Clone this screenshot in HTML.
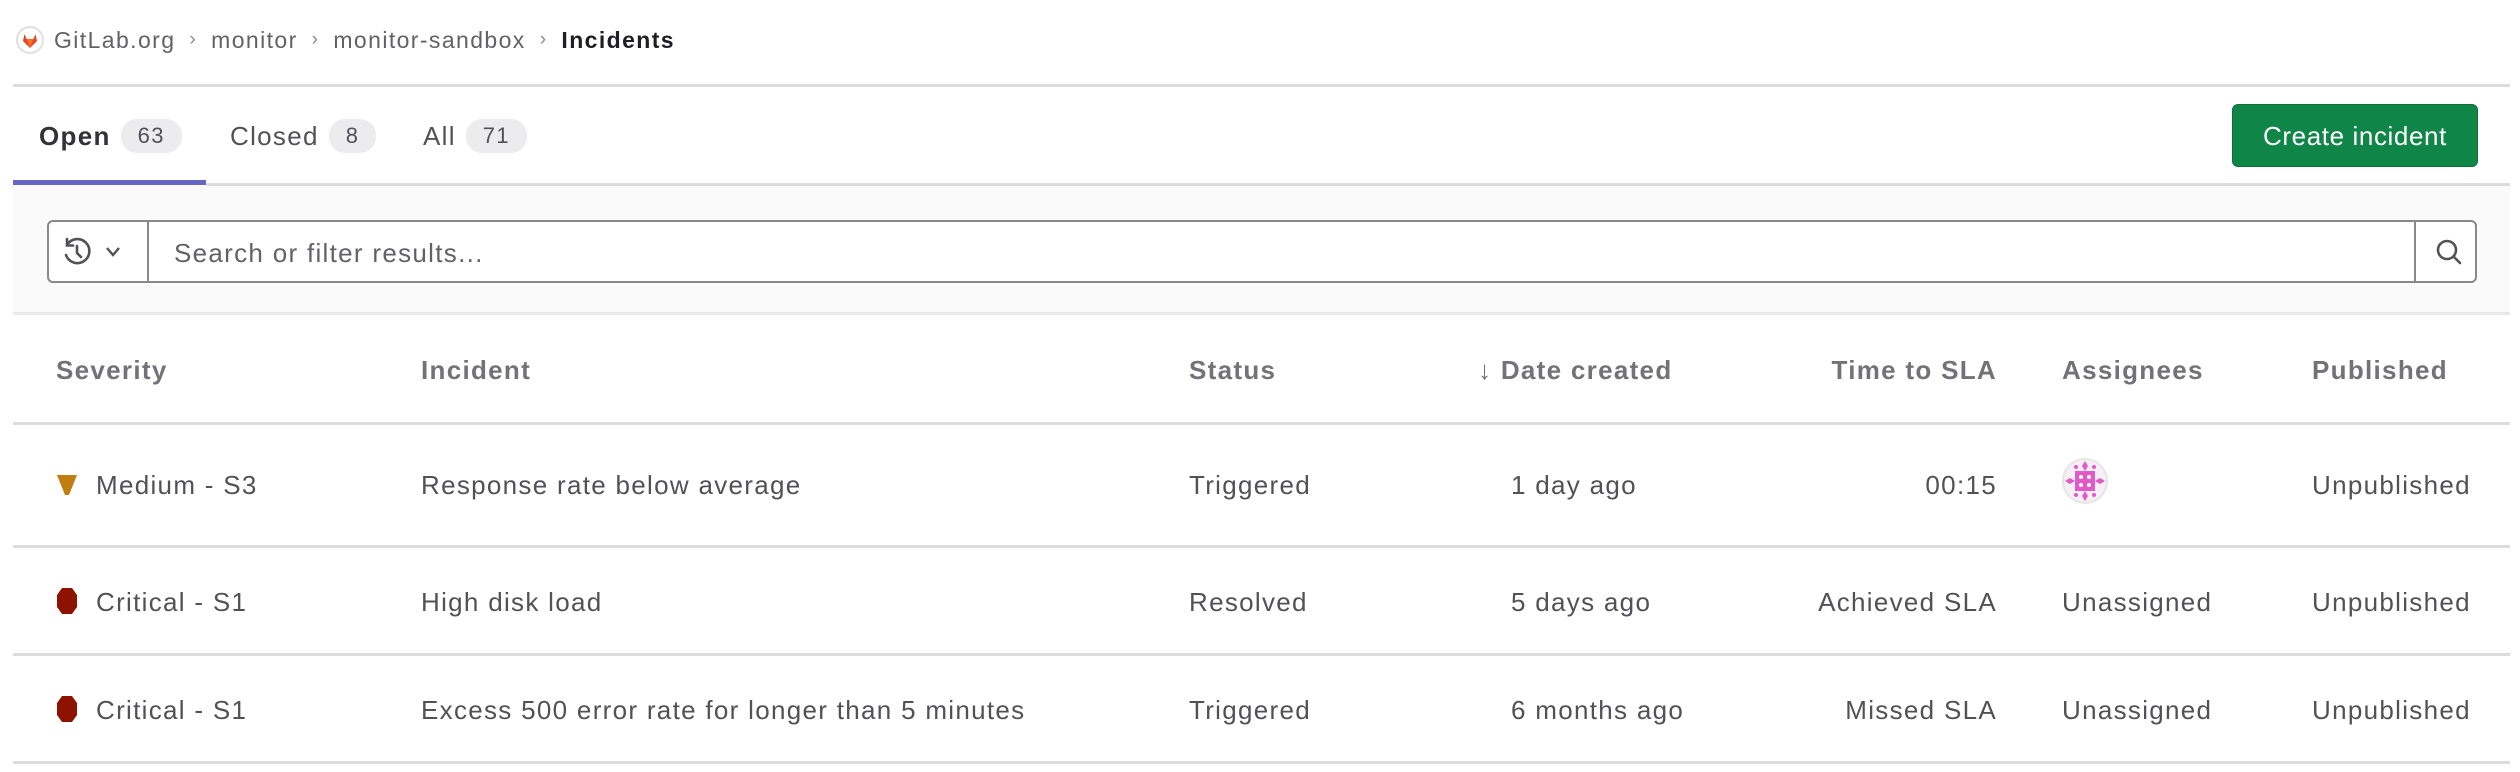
<!DOCTYPE html>
<html><head><meta charset="utf-8"><style>
*{box-sizing:border-box;margin:0;padding:0}
body{width:2520px;height:772px;background:#fff;font-family:"Liberation Sans",sans-serif;color:#535158;position:relative;overflow:hidden;letter-spacing:1.3px}
.abs{position:absolute}
.bc{top:24px;left:16px;height:32px;display:flex;align-items:center;font-size:23px;color:#626168;letter-spacing:1.4px}
.bc .sep{margin:0 14px;color:#89888d;font-size:19px}
.hl{left:13px;right:10px;height:3px;background:#dcdcde}
.tab{top:119px;font-size:26px;display:flex;align-items:center;color:#535158}
.badge{background:#ececef;border-radius:16px;height:34px;line-height:34px;padding:0 17px;font-size:22px;margin-left:10px;color:#535158}
.btn{left:2232px;top:104px;width:246px;height:63px;background:#108548;border-radius:6px;color:#fff;font-size:26px;text-align:center;line-height:63px;border:1px solid #0d6e3a;letter-spacing:0.6px}
.filter{left:13px;right:10px;top:186px;height:129px;background:#fafafa;border-bottom:3px solid #e8e8ea}
.search{left:47px;top:220px;width:2430px;height:63px;border:2px solid #89888d;border-radius:6px;background:#fff}
.th{top:355px;font-size:26px;font-weight:bold;color:#737278}
.td{font-size:26px;color:#535158}
</style></head><body>
<div class="abs bc">
<svg width="28" height="28" viewBox="0 0 28 28" style="margin-right:10px"><circle cx="14" cy="14" r="13" fill="#fff" stroke="#e0e0e0" stroke-width="2"/><path d="M14 22 L7 15 L8.5 8 L10.5 13 H17.5 L19.5 8 L21 15 Z" fill="#e24329"/><path d="M14 22 L10.5 13 H17.5 Z" fill="#fc6d26"/></svg>
<span>GitLab.org</span><span class="sep">›</span><span>monitor</span><span class="sep">›</span><span>monitor-sandbox</span><span class="sep">›</span><span style="color:#1f1e24;font-weight:bold">Incidents</span></div>
<div class="abs hl" style="top:84px"></div>
<div class="abs tab" style="left:39px;font-weight:bold;color:#333238">Open<span class="badge" style="font-weight:normal">63</span></div>
<div class="abs tab" style="left:230px">Closed<span class="badge">8</span></div>
<div class="abs tab" style="left:423px">All<span class="badge">71</span></div>
<div class="abs btn">Create incident</div>
<div class="abs filter"></div>
<div class="abs" style="left:13px;top:180px;width:193px;height:5px;background:#6666c4"></div>
<div class="abs" style="left:206px;right:10px;top:183px;height:3px;background:#dcdcde"></div>
<div class="abs search">
 <svg class="abs" style="left:12px;top:14px" width="32" height="32" viewBox="0 0 32 32" fill="none" stroke="#535158" stroke-width="2.6" stroke-linecap="round"><path d="M6 9 A12 12 0 1 1 5 19"/><path d="M6 3 V9.5 H12"/><path d="M16 10 V17 L20 21"/></svg>
 <svg class="abs" style="left:56px;top:24px" width="16" height="12" viewBox="0 0 16 12" fill="none" stroke="#535158" stroke-width="2.4"><path d="M2 2 L8 9 L14 2"/></svg>
 <div class="abs" style="left:98px;top:0;bottom:0;width:2px;background:#89888d"></div>
 <div class="abs" style="left:125px;top:16px;font-size:26px;color:#626168">Search or filter results...</div>
 <div class="abs" style="left:2365px;top:0;bottom:0;width:2px;background:#89888d"></div>
 <svg class="abs" style="left:2384px;top:14px" width="32" height="32" viewBox="0 0 32 32" fill="none" stroke="#535158" stroke-width="2.6" stroke-linecap="round"><circle cx="14" cy="14" r="9"/><path d="M21 21 L27 27"/></svg>
</div>
<div class="abs th" style="left:56px">Severity</div>
<div class="abs th" style="left:421px">Incident</div>
<div class="abs th" style="left:1189px">Status</div>
<div class="abs th" style="left:1478px;color:#737278">↓ Date created</div>
<div class="abs th" style="left:1600px;width:397px;text-align:right">Time to SLA</div>
<div class="abs th" style="left:2062px">Assignees</div>
<div class="abs th" style="left:2312px">Published</div>
<div class="abs hl" style="top:422px;height:3px"></div>
<!-- row1 -->
<svg class="abs" style="left:56px;top:474px" width="22" height="22" viewBox="0 0 22 22"><path d="M1 1 H21 L13 21 H9 Z" fill="#c17d10"/></svg>
<div class="abs td" style="left:96px;top:470px">Medium - S3</div>
<div class="abs td" style="left:421px;top:470px">Response rate below average</div>
<div class="abs td" style="left:1189px;top:470px">Triggered</div>
<div class="abs td" style="left:1511px;top:470px">1 day ago</div>
<div class="abs td" style="left:1600px;width:397px;text-align:right;top:470px">00:15</div>
<svg class="abs" style="left:2062px;top:458px" width="46" height="46" viewBox="0 0 46 46"><circle cx="23" cy="23" r="22" fill="#f7eef6" stroke="#e6e6e6" stroke-width="2"/><rect x="13" y="13" width="20" height="20" fill="#e05bc8"/><g fill="#fff"><circle cx="19" cy="19" r="2"/><circle cx="27" cy="19" r="2"/><circle cx="19" cy="27" r="2"/><circle cx="27" cy="27" r="2"/></g><g fill="#e05bc8"><path d="M23 3 l3 5 -3 5 -3 -5z"/><path d="M23 33 l3 5 -3 5 -3 -5z"/><path d="M3 23 l5 -3 5 3 -5 3z"/><path d="M33 23 l5 -3 5 3 -5 3z"/><circle cx="14" cy="9" r="2"/><circle cx="32" cy="9" r="2"/><circle cx="14" cy="37" r="2"/><circle cx="32" cy="37" r="2"/></g></svg>
<div class="abs td" style="left:2312px;top:470px">Unpublished</div>
<div class="abs hl" style="top:545px"></div>
<!-- row2 -->
<svg class="abs" style="left:56px;top:587px" width="22" height="28" viewBox="0 0 22 28"><path d="M6 1 H16 L21 8 V20 L16 27 H6 L1 20 V8 Z" fill="#8d1300"/></svg>
<div class="abs td" style="left:96px;top:587px">Critical - S1</div>
<div class="abs td" style="left:421px;top:587px">High disk load</div>
<div class="abs td" style="left:1189px;top:587px">Resolved</div>
<div class="abs td" style="left:1511px;top:587px">5 days ago</div>
<div class="abs td" style="left:1600px;width:397px;text-align:right;top:587px">Achieved SLA</div>
<div class="abs td" style="left:2062px;top:587px">Unassigned</div>
<div class="abs td" style="left:2312px;top:587px">Unpublished</div>
<div class="abs hl" style="top:653px"></div>
<!-- row3 -->
<svg class="abs" style="left:56px;top:695px" width="22" height="28" viewBox="0 0 22 28"><path d="M6 1 H16 L21 8 V20 L16 27 H6 L1 20 V8 Z" fill="#8d1300"/></svg>
<div class="abs td" style="left:96px;top:695px">Critical - S1</div>
<div class="abs td" style="left:421px;top:695px">Excess 500 error rate for longer than 5 minutes</div>
<div class="abs td" style="left:1189px;top:695px">Triggered</div>
<div class="abs td" style="left:1511px;top:695px">6 months ago</div>
<div class="abs td" style="left:1600px;width:397px;text-align:right;top:695px">Missed SLA</div>
<div class="abs td" style="left:2062px;top:695px">Unassigned</div>
<div class="abs td" style="left:2312px;top:695px">Unpublished</div>
<div class="abs hl" style="top:761px"></div>
</body></html>
